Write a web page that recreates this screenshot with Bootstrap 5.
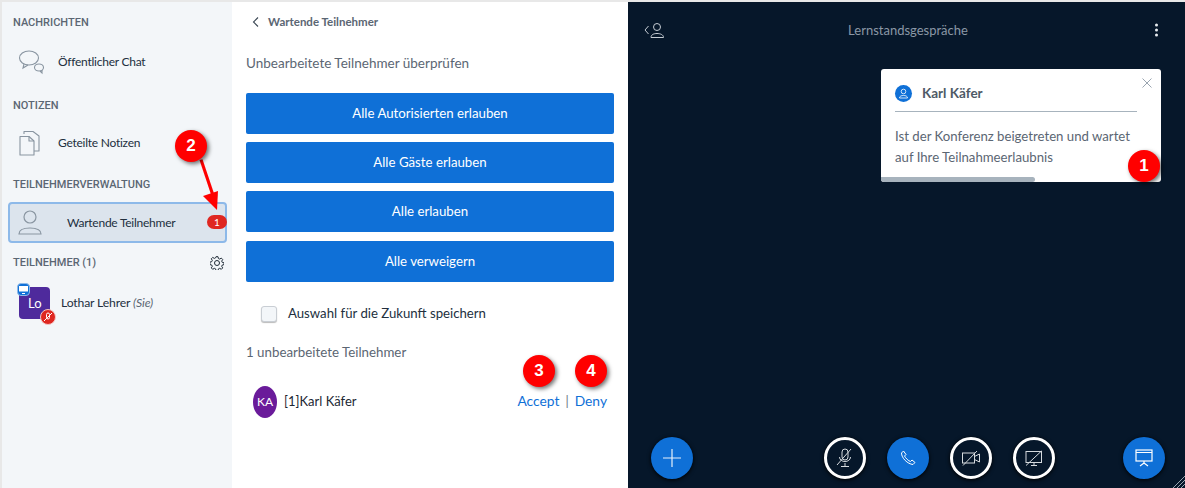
<!DOCTYPE html>
<html lang="de">
<head>
  <meta charset="UTF-8">
  <title>Wartende Teilnehmer</title>
  <link href="https://cdn.jsdelivr.net/npm/bootstrap@5.3.3/dist/css/bootstrap.min.css" rel="stylesheet">
  <style>
    html, body { height: 488px; overflow: hidden; }
    body { font-family: "Lato", "Liberation Sans", sans-serif; font-size: 13px; color: #222f3e; background: #fff; position: relative; }
    .app-shell { height: 488px; border-top: 2px solid #e8e8e8; border-left: 2px solid #e8e8e8; }

    /* left panel */
    .side-panel { width: 230px; background: #f3f6f9; padding-top: 13px; flex: none; }
    .side-title { font-family: "Roboto", sans-serif; font-size: 11px; font-weight: 500; color: #5b6673; padding-left: 11px; line-height: 16px; }
    .title-notes { margin-top: 5px; }
    .title-manage { margin-top: 6px; margin-bottom: 9px; }
    .side-row { display: flex; align-items: center; padding-left: 16px; font-size: 12px; letter-spacing: -.25px; }
    .side-row svg { width: 26px; height: 28px; margin-right: 14px; flex: none; }
    .row-chat { height: 62px; }
    .row-notes { height: 57px; }
    .side-active { height: 41px; margin: 0 5px 0 6px; background: #dce4ed; border: 2px solid #8db9e9; border-radius: 4px; display: flex; align-items: center; padding-left: 8px; position: relative; font-size: 12px; letter-spacing: -.25px; }
    .active-label { margin-left: 25px; }
    .count-pill { position: absolute; right: -2px; top: 11px; width: 20px; height: 14px; line-height: 14px; text-align: center; border-radius: 8px; background: #df2721; color: #fff; font-size: 10px; letter-spacing: 0; }
    .users-head { margin-top: 12px; padding-right: 8px; }
    .me-row { margin-top: 16px; padding-left: 17px; }
    .me-name { font-size: 12.2px; letter-spacing: -.15px; }
    .me-you { color: #5b6673; }
    .me-avatar { width: 31px; height: 32px; background: #4e2a9c; border-radius: 4px; color: #fff; font-size: 13px; position: relative; margin-right: 11px; }
    .me-letters { position: absolute; left: 9px; top: 7px; }
    .me-screen { position: absolute; left: -2px; top: -4px; width: 13px; height: 13px; background: #0f70d7; border-radius: 4px; border: 1px solid #8db9e9; }
    .me-mute { position: absolute; right: -6px; bottom: -6px; width: 16px; height: 16px; background: #df2721; border-radius: 50%; border: 1px solid #f3c6c4; }

    /* middle panel */
    .mid-panel { width: 396px; background: #fff; padding: 0 14px; flex: none; }
    .back-link { font-size: 11.5px; font-weight: 700; color: #5b6673; height: 40px; padding-left: 6px; }
    .intro-text { color: #5b6673; font-size: 13.5px; line-height: 18px; margin-top: 12px; margin-bottom: 21px; }
    .btn-stack { row-gap: 8px; }
    .allow-btn { background: #0f70d7; border: 0; border-radius: 2px; height: 41px; width: 100%; color: #fff; font-size: 13.25px; display: block; }
    .allow-last { margin-top: 1px; }
    .remember-row { margin-top: 22px; padding-left: 15px; font-size: 13.2px; color: #222f3e; }
    .remember-box { width: 16px; height: 16px; border: 1px solid #c9ced4; background: #f3f6f9; border-radius: 3px; box-shadow: 0 1px 1px #bbb; margin-right: 11px; }
    .pending-count { color: #5b6673; margin-top: 19px; font-size: 13.3px; }
    .pending-row { margin-top: 23px; padding: 0 7px; }
    .karl-avatar { width: 24px; height: 32px; background: #6a1b9a; border-radius: 50%; color: #fff; font-size: 12px; margin-right: 7px; }
    .karl-name { font-size: 13px; color: #1c2732; }
    .act-links { gap: 6px; }
    .act-link { color: #0f70d7; font-size: 13.8px; text-decoration: none; }

    /* video panel */
    .video-panel { flex: 1; background: #06172a; position: relative; }
    .video-head { height: 56px; padding: 0 26px 0 16px; }
    .video-title { color: #8b98a6; font-size: 13px; line-height: 18px; margin-right: 3px; }
    .toast-box { position: absolute; left: 253px; top: 67px; width: 280px; height: 113px; background: #fff; border-radius: 3px; padding: 0 14px; overflow: hidden; }
    .toast-close { position: absolute; right: 9px; top: 9px; }
    .toast-bar { position: absolute; left: 0; bottom: 0; width: 154px; height: 5px; background: #a7b3bd; border-radius: 0 3px 3px 0; }
    .toast-head { height: 43px; border-bottom: 1px solid #a7b3bd; width: 242px; font-weight: 700; color: #4e5a66; font-size: 13.5px; padding-top: 6px; }
    .toast-dot { width: 17px; height: 17px; background: #0f70d7; border-radius: 50%; margin-right: 10px; }
    .toast-text { color: #5b6673; font-size: 13.2px; line-height: 21px; margin-top: 14px; }
    .media-bar { position: absolute; left: 23px; right: 20px; bottom: 9px; }
    .media-group { gap: 21px; margin-left: 62px; }
    .round-btn { width: 42px; height: 42px; border-radius: 50%; background: #0f70d7; display: flex; align-items: center; justify-content: center; box-shadow: 0 1px 4px #000; }
    .round-off { background: #06172a; border: 3px solid #fff; }
    .grip-over { position: absolute; right: 0; bottom: 0; }

    /* numbered callouts */
    .step-dot { position: absolute; width: 32px; height: 32px; border-radius: 50%; background: #f00; color: #fff; font-weight: 700; font-size: 17px; line-height: 32px; text-align: center; box-shadow: 2px 2px 4px rgba(0,0,0,.55); font-family: "Liberation Sans", sans-serif; }
    .step-one { left: 1128px; top: 150px; }
    .step-two { left: 175px; top: 130px; }
    .step-three { left: 523px; top: 355px; }
    .step-four { left: 575px; top: 355px; }
    .arrow-over { position: absolute; left: 190px; top: 150px; }
  </style>
</head>
<body>
  <div class="app-shell d-flex">
    <div class="side-panel">
      <div class="side-title">NACHRICHTEN</div>
      <div class="side-row row-chat">
        <svg viewBox="0 0 26 28" fill="none" stroke="#8995a1" stroke-width="1.1"><ellipse cx="11" cy="10" rx="9.5" ry="7"/><path d="M6 16l-1 4 5-3"/><ellipse cx="21" cy="19.5" rx="4.5" ry="3.5"/><path d="M22 23l2 2v-3"/></svg>
        <span>Öffentlicher Chat</span>
      </div>
      <div class="side-title title-notes">NOTIZEN</div>
      <div class="side-row row-notes">
        <svg viewBox="0 0 26 28" fill="none" stroke="#8995a1" stroke-width="1.1" stroke-linejoin="round"><path d="M2 7.500h9l5 4.500v14H2z"/><path d="M6 5V2.500h9l6 4.500v15h-5"/><path d="M11 7.500V12h5"/></svg>
        <span>Geteilte Notizen</span>
      </div>
      <div class="side-title title-manage">TEILNEHMERVERWALTUNG</div>
      <div class="side-active">
        <svg width="24" height="26" viewBox="0 0 24 26" fill="none" stroke="#8995a1" stroke-width="1.2"><circle cx="12" cy="7" r="6"/><path d="M1 24c0-5 6-6 11-6s11 1 11 6z"/></svg>
        <span class="active-label">Wartende Teilnehmer</span>
        <span class="count-pill">1</span>
      </div>
      <div class="users-head d-flex justify-content-between align-items-center">
        <div class="side-title">TEILNEHMER (1)</div>
        <svg width="14" height="14" viewBox="0 0 14 14" fill="none" stroke="#1f2b37" stroke-width="1"><circle cx="7" cy="7" r="2.500"/><path d="M6 .7h2l.4 1.800 1.300.6 1.600-1 1.400 1.400-1 1.600.6 1.300 1.800.4v1.800l-1.800.4-.6 1.300 1 1.600-1.400 1.400-1.600-1-1.300.6-.4 1.800H6l-.4-1.800-1.300-.6-1.600 1-1.400-1.400 1-1.600-.6-1.300-1.800-.4V6.100l1.800-.4.600-1.300-1-1.600 1.400-1.400 1.600 1 1.300-.6z"/></svg>
      </div>
      <div class="me-row d-flex align-items-center">
        <div class="me-avatar">
          <span class="me-letters">Lo</span>
          <span class="me-screen d-flex align-items-center justify-content-center"><svg width="9" height="9" viewBox="0 0 9 9" fill="#fff"><rect x="0" y="1" width="9" height="5.500"/><path d="M3 8h3v1H3z"/></svg></span>
          <span class="me-mute d-flex align-items-center justify-content-center"><svg width="10" height="10" viewBox="0 0 10 10" fill="none" stroke="#fff" stroke-width="1"><rect x="3.500" y="1" width="3" height="6" rx="1.500"/><path d="M1 9l8-8"/></svg></span>
        </div>
        <span class="me-name">Lothar Lehrer <i class="me-you">(Sie)</i></span>
      </div>
    </div>

    <div class="mid-panel">
      <div class="back-link d-flex align-items-center">
        <svg width="8" height="10" viewBox="0 0 8 10" fill="none" stroke="#3b4754" stroke-width="1.100" class="me-2"><path d="M6 .5L1.500 5 6 9.500"/></svg>
        <span>Wartende Teilnehmer</span>
      </div>
      <div class="intro-text">Unbearbeitete Teilnehmer überprüfen</div>
      <div class="d-grid btn-stack">
        <button class="allow-btn">Alle Autorisierten erlauben</button>
        <button class="allow-btn">Alle Gäste erlauben</button>
        <button class="allow-btn">Alle erlauben</button>
        <button class="allow-btn allow-last">Alle verweigern</button>
      </div>
      <div class="remember-row d-flex align-items-center">
        <span class="remember-box"></span>
        <span>Auswahl für die Zukunft speichern</span>
      </div>
      <div class="pending-count">1 unbearbeitete Teilnehmer</div>
      <div class="pending-row d-flex align-items-center">
        <div class="karl-avatar d-flex align-items-center justify-content-center">KA</div>
        <span class="karl-name">[1]Karl Käfer</span>
        <div class="act-links ms-auto d-flex align-items-center">
          <a class="act-link" href="#">Accept</a><span class="text-secondary">|</span><a class="act-link" href="#">Deny</a>
        </div>
      </div>
    </div>

    <div class="video-panel">
      <div class="video-head d-flex align-items-center justify-content-between">
        <svg width="21" height="17" viewBox="0 0 21 17" fill="none" stroke="#c5ccd3" stroke-width="1"><path d="M4.500 4L1 8l3.500 4"/><circle cx="13" cy="5" r="3.500"/><path d="M7 15.500c0-3 3-4 6-4s6.500 1 6.500 4z"/></svg>
        <span class="video-title">Lernstandsgespräche</span>
        <svg width="5" height="14" viewBox="0 0 5 14" fill="#e7ebef"><circle cx="2.500" cy="2" r="1.500"/><circle cx="2.500" cy="7" r="1.500"/><circle cx="2.500" cy="12" r="1.500"/></svg>
      </div>
      <div class="toast-box">
        <svg class="toast-close" width="10" height="10" viewBox="0 0 10 10" stroke="#9aa5b0" stroke-width="1"><path d="M.5.500l9 9M9.500.500l-9 9"/></svg>
        <div class="toast-head d-flex align-items-center">
          <span class="toast-dot d-flex align-items-center justify-content-center"><svg width="11" height="11" viewBox="0 0 11 11" fill="none" stroke="#fff" stroke-width=".8"><circle cx="5.500" cy="3.500" r="2.300"/><path d="M1.500 10c0-2 2-2.500 4-2.500s4 .5 4 2.500z"/></svg></span>
          <span>Karl Käfer</span>
        </div>
        <div class="toast-text">Ist der Konferenz beigetreten und wartet<br>auf Ihre Teilnahmeerlaubnis</div>
        <div class="toast-bar"></div>
      </div>
      <div class="media-bar d-flex justify-content-between align-items-center">
        <div class="round-btn"><svg width="18" height="18" viewBox="0 0 18 18" stroke="#e7f0fb" stroke-width="1.200"><path d="M9 0v18M0 9h18"/></svg></div>
        <div class="media-group d-flex">
          <div class="round-btn round-off"><svg width="18" height="20" viewBox="0 0 18 20" fill="none" stroke="#d5dade" stroke-width="1"><rect x="6" y="1" width="6" height="11" rx="3"/><path d="M3.500 9c0 6 11 6 11 0M9 15v3M5 18.500h8M1 17L15 1"/></svg></div>
          <div class="round-btn"><svg width="16" height="16" viewBox="0 0 16 16" fill="none" stroke="#fff" stroke-width="1"><path d="M3.500 1L1.500 3c0 5 6 11 11.500 11.500l2-2-3-2.500-1.500 1.500C8.500 11 5.500 8 4.500 6L6 4.500z"/></svg></div>
          <div class="round-btn round-off"><svg width="18" height="16" viewBox="0 0 18 16" fill="none" stroke="#d5dade" stroke-width="1"><rect x=".5" y="3" width="12" height="10"/><path d="M12.500 6.500L17.500 4v8l-5-2.500M1 15.500L15 1"/></svg></div>
          <div class="round-btn round-off"><svg width="18" height="17" viewBox="0 0 18 17" fill="none" stroke="#d5dade" stroke-width="1"><rect x="1" y="1.500" width="15.500" height="11"/><path d="M6 15.500h6M9 12.500v3M1 15.500L16.500 1"/></svg></div>
        </div>
        <div class="round-btn"><svg width="18" height="18" viewBox="0 0 18 18" fill="none" stroke="#fff" stroke-width="1.200"><rect x="1" y="1" width="16" height="11"/><path d="M1 3.500h16M9 12v2M9 14l-4 3M9 14l4 3"/></svg></div>
      </div>
      <svg class="grip-over" width="14" height="14" viewBox="0 0 14 14" stroke="#9aa5b0" stroke-width="1"><path d="M14 2L2 14M14 6l-8 8M14 10l-4 4"/></svg>
    </div>
  </div>

  <!-- numbered callouts over the screenshot -->
  <svg class="arrow-over" width="40" height="70" viewBox="0 0 40 70" fill="#f00"><path d="M9.500 10l3-.8L24.200 44l-3 1z"/><path d="M13 46l15-5-1 19z"/></svg>
  <div class="step-dot step-two">2</div>
  <div class="step-dot step-one">1</div>
  <div class="step-dot step-three">3</div>
  <div class="step-dot step-four">4</div>
</body>
</html>
